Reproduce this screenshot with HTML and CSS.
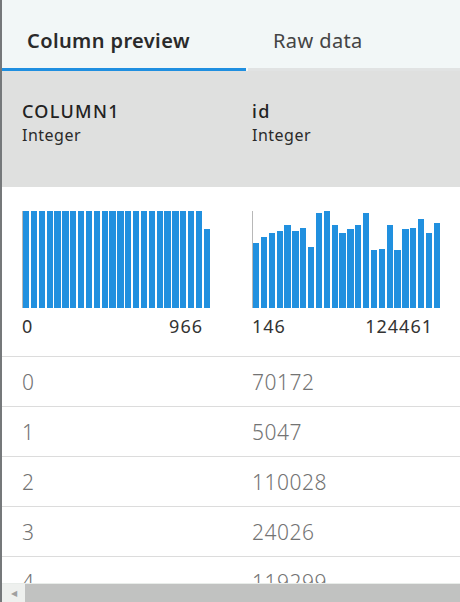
FILE: index.html
```html
<!DOCTYPE html>
<html>
<head>
<meta charset="utf-8">
<link rel="stylesheet" href="styles.css">
</head>
<body>
<div class="app">
  <div class="tabs">
    <div class="tab tab-active">Column preview</div>
    <div class="tab">Raw data</div>
  </div>
  <div class="viewport">
    <div class="table">
      <div class="thead">
        <div class="th"><div class="col-name">COLUMN1</div><div class="col-type">Integer</div></div>
        <div class="th"><div class="col-name">id</div><div class="col-type">Integer</div></div>
      </div>
      <div class="charts">
        <div class="cell-chart">
          <div class="chart">
            <div class="bar" style="height:100%"></div><div class="bar" style="height:100%"></div><div class="bar" style="height:100%"></div><div class="bar" style="height:100%"></div><div class="bar" style="height:100%"></div><div class="bar" style="height:100%"></div><div class="bar" style="height:100%"></div><div class="bar" style="height:100%"></div><div class="bar" style="height:100%"></div><div class="bar" style="height:100%"></div><div class="bar" style="height:100%"></div><div class="bar" style="height:100%"></div><div class="bar" style="height:100%"></div><div class="bar" style="height:100%"></div><div class="bar" style="height:100%"></div><div class="bar" style="height:100%"></div><div class="bar" style="height:100%"></div><div class="bar" style="height:100%"></div><div class="bar" style="height:100%"></div><div class="bar" style="height:100%"></div><div class="bar" style="height:100%"></div><div class="bar" style="height:100%"></div><div class="bar" style="height:100%"></div><div class="bar" style="height:81%"></div>
          </div>
          <div class="range"><span>0</span><span>966</span></div>
        </div>
        <div class="cell-chart">
          <div class="chart">
            <div class="bar" style="height:67%"></div><div class="bar" style="height:73%"></div><div class="bar" style="height:77%"></div><div class="bar" style="height:79%"></div><div class="bar" style="height:86%"></div><div class="bar" style="height:79%"></div><div class="bar" style="height:83%"></div><div class="bar" style="height:63%"></div><div class="bar" style="height:98%"></div><div class="bar" style="height:100%"></div><div class="bar" style="height:86%"></div><div class="bar" style="height:77%"></div><div class="bar" style="height:81%"></div><div class="bar" style="height:86%"></div><div class="bar" style="height:98%"></div><div class="bar" style="height:60%"></div><div class="bar" style="height:61%"></div><div class="bar" style="height:86%"></div><div class="bar" style="height:60%"></div><div class="bar" style="height:81%"></div><div class="bar" style="height:83%"></div><div class="bar" style="height:92%"></div><div class="bar" style="height:77%"></div><div class="bar" style="height:88%"></div>
          </div>
          <div class="range"><span>146</span><span>124461</span></div>
        </div>
      </div>
      <div class="row"><div class="td">0</div><div class="td">70172</div></div>
      <div class="row"><div class="td">1</div><div class="td">5047</div></div>
      <div class="row"><div class="td">2</div><div class="td">110028</div></div>
      <div class="row"><div class="td">3</div><div class="td">24026</div></div>
      <div class="row"><div class="td">4</div><div class="td">119299</div></div>
    </div>
  </div>
  <div class="hscroll">
    <div class="hscroll-btn">&#9664;</div>
    <div class="hscroll-thumb"></div>
  </div>
</div>
</body>
</html>
```

FILE: styles.css
```css
html, body {
  margin: 0;
  padding: 0;
  background: #ffffff;
}
body {
  width: 460px;
  height: 602px;
  overflow: hidden;
  font-family: "Noto Sans", "Open Sans", sans-serif;
  color: #222;
}
.app {
  height: 602px;
  box-sizing: border-box;
  border-left: 2px solid #75787a;
  display: flex;
  flex-direction: column;
}
.tabs {
  display: flex;
  height: 71px;
  flex: none;
  background: #f2f7f7;
  overflow: hidden;
}
.tab {
  flex: none;
  width: 244px;
  box-sizing: border-box;
  padding: 29px 0 0 25px;
  font-size: 20px;
  line-height: 24px;
  letter-spacing: 0.4px;
  color: #444;
  border-bottom: 3px solid #e1e3e3;
  margin-left: 2px;
}
.tab-active {
  margin-left: 0;
  font-weight: 600;
  color: #2a2a2a;
  border-bottom-color: #1f8fe0;
}
.viewport {
  flex: 1;
  overflow: hidden;
  min-height: 0;
}
.table {
  width: 460px;
}
.thead {
  display: grid;
  grid-template-columns: 230px 230px;
  height: 116px;
  background: #dfe0df;
}
.th {
  padding: 28px 0 0 20px;
}
.col-name {
  font-size: 18px;
  line-height: 24px;
  font-weight: 500;
  letter-spacing: 1.3px;
  color: #222;
}
.col-type {
  font-size: 16px;
  line-height: 24px;
  letter-spacing: 0.5px;
  color: #2a2a2a;
}
.charts {
  display: grid;
  grid-template-columns: 230px 230px;
  height: 169px;
  border-bottom: 1px solid #dcdcdc;
}
.cell-chart {
  padding: 24px 0 0 20px;
}
.chart {
  width: 187px;
  height: 97px;
  border-left: 1px solid #b8b8b8;
  display: flex;
  align-items: flex-end;
  gap: 1.6px;
}
.bar {
  flex: 1;
  background: #2190df;
}
.range {
  width: 181px;
  display: flex;
  justify-content: space-between;
  font-size: 18px;
  line-height: 24px;
  letter-spacing: 1px;
  margin-top: 6px;
  color: #333;
}
.row {
  display: grid;
  grid-template-columns: 230px 230px;
  height: 49px;
  border-bottom: 1px solid #dcdcdc;
  align-items: center;
}
.td {
  padding-left: 20px;
  font-size: 21px;
  font-weight: 300;
  letter-spacing: 0.5px;
  color: #737373;
}
.hscroll {
  flex: none;
  height: 19px;
  display: flex;
  border-top: 1px solid #e8ece9;
  box-sizing: border-box;
}
.hscroll-btn {
  width: 23px;
  background: #eef0ee;
  color: #a0a0a0;
  font-size: 8px;
  line-height: 18px;
  text-align: center;
}
.hscroll-thumb {
  flex: 1;
  background: #c1c2c1;
}
```
